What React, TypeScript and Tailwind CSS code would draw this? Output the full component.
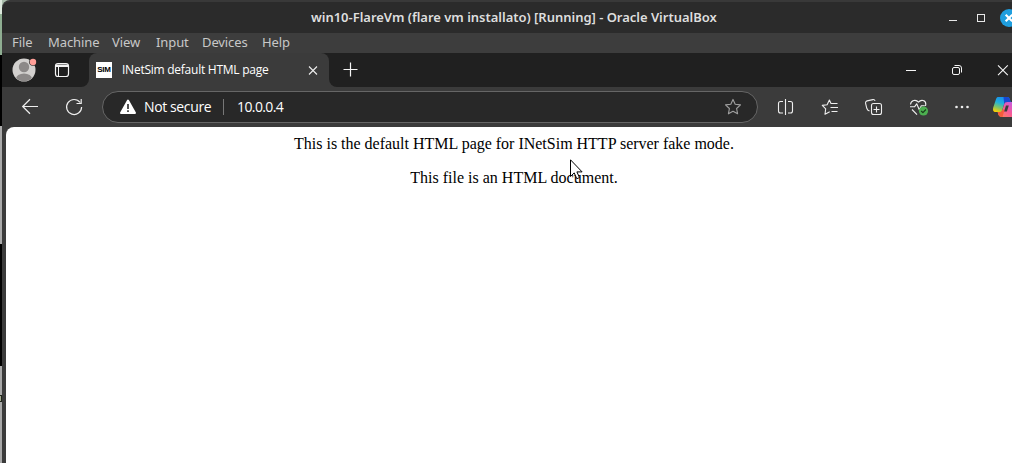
import React from "react";

const menuItems = [
  { label: "File", box: "w-[36px]" },
  { label: "Machine", box: "w-[64px]" },
  { label: "View", box: "w-[44px]" },
  { label: "Input", box: "w-[46px]" },
  { label: "Devices", box: "w-[60px]" },
  { label: "Help", box: "w-[40px]" },
];

function TitleBar() {
  return (
    <div className="h-[33px] shrink-0 bg-[linear-gradient(90deg,#a9bdab_10px,#393939_10px)]">
      <div className="flex h-full items-center rounded-tl-lg border-t-2 border-[#393939] bg-[#2b2b2b]">
        <div className="w-[309px]" />
        <div className="w-[406px] whitespace-nowrap pb-[2px] font-['Noto_Sans','Open_Sans',sans-serif] text-[13px] font-semibold leading-5 tracking-[-0.02px] text-[#dedede]">
          win10-FlareVm (flare vm installato) [Running] - Oracle VirtualBox
        </div>
        <svg className="ml-auto shrink-0" width="72" height="30" viewBox="0 0 72 30">
          <path d="M9 17.500h8" stroke="#e8e8e8" />
          <rect x="37.500" y="11.500" width="7" height="7" fill="none" stroke="#e8e8e8" />
          <circle cx="69" cy="15" r="9" fill="#1f9ede" />
          <path d="M65.700 11.700l6.600 6.600M72.300 11.700l-6.600 6.600" stroke="#fff" strokeWidth="2.200" />
        </svg>
      </div>
    </div>
  );
}

function MenuBar() {
  return (
    <div className="flex h-5 shrink-0 items-center bg-[#3d3d3d] pb-[2px] pl-[10px] font-['Noto_Sans','Open_Sans',sans-serif] text-[13px] leading-[18px] tracking-[-0.1px] text-[#c8c8c8]">
      {menuItems.map((m) => (
        <div key={m.label} className={`${m.box} shrink-0 whitespace-nowrap`}>
          {m.label}
        </div>
      ))}
    </div>
  );
}

function TabStrip() {
  return (
    <div className="flex h-[34px] shrink-0 bg-[#3b3b3b]">
      <div className="w-[87px] rounded-br-lg bg-[#202020]">
        <svg width="87" height="34" viewBox="2 53 87 34">
          <defs>
            <clipPath id="avatar"><circle cx="24" cy="70" r="11.3" /></clipPath>
          </defs>
          <circle cx="24" cy="70" r="11.5" fill="#d2d0ce" />
          <g clipPath="url(#avatar)" fill="#8c8988">
            <circle cx="24" cy="67" r="5.2" />
            <ellipse cx="24" cy="79" rx="8" ry="5.5" />
          </g>
          <circle cx="33" cy="62" r="3.8" fill="#202020" />
          <circle cx="33" cy="62" r="3.2" fill="#ff9e97" />
          <rect x="55.5" y="63.5" width="13" height="13" rx="2.5" fill="none" stroke="#f5f5f5" strokeWidth="1.2" />
          <path d="M56 64.5h12v2.500H56z" fill="#f5f5f5" />
          <path d="M58.5 67v9" stroke="#f5f5f5" />
        </svg>
      </div>
      <div className="w-[240px] bg-[#202020]">
        <div className="flex h-full items-center rounded-t-lg bg-[#3b3b3b] pl-[7px]">
          <div className="flex h-4 w-4 shrink-0 items-center justify-center overflow-hidden bg-white font-['Liberation_Sans',sans-serif] text-[8px] font-bold leading-4 tracking-[-0.2px] text-black">
            SIM
          </div>
          <div className="ml-[10px] w-[186px] whitespace-nowrap font-['Open_Sans','Noto_Sans',sans-serif] text-[12px] leading-4 tracking-[-0.25px] text-white">
            INetSim default HTML page
          </div>
          <svg className="shrink-0" width="10" height="10" viewBox="0 0 10 10">
            <path d="M1 1.500l8 8M9 1.500l-8 8" stroke="#eee" strokeWidth="1.1" />
          </svg>
        </div>
      </div>
      <div className="flex flex-1 rounded-bl-lg bg-[#202020]">
        <svg width="683" height="34" viewBox="329 53 683 34" fill="none" stroke="#f5f5f5">
          <path d="M343.5 69.5h14M350.5 62.5v14" strokeWidth="1.2" />
          <path d="M906 70.5h10" />
          <rect x="952.5" y="67.5" width="7" height="7" rx="1.5" />
          <path d="M954.5 65.5h4.5a2.5 2.5 0 0 1 2.5 2.5v4.5" />
          <path d="M998 65.3l9.8 9.8M1007.8 65.3l-9.8 9.8" strokeWidth="1.1" />
        </svg>
      </div>
    </div>
  );
}

function Toolbar() {
  return (
    <div className="flex h-10 shrink-0 items-center bg-[#3b3b3b]">
      <svg className="shrink-0" width="100" height="40" viewBox="2 87 100 40" fill="none" stroke="#eee" strokeWidth="1.2">
        <path d="M38 106.5H22.8M30 99.3l-7.3 7.2 7.3 7.2" />
        <path d="M80.1 102.5a7.5 7.5 0 1 0 1.5 4.5M81.2 99v4.5h-4.7" />
      </svg>
      <div className="flex h-8 w-[656px] shrink-0 items-center rounded-full border border-[#666] bg-[#282828] pl-[17px] font-['Open_Sans','Noto_Sans',sans-serif] text-[14px] leading-5 text-white">
        <svg className="shrink-0" width="16" height="16" viewBox="0 0 16 16">
          <path d="M8 1.5L15 14H1z" fill="#fff" stroke="#fff" strokeWidth="2" strokeLinejoin="round" />
          <path d="M8 5v5M8 11.3v1.7" stroke="#282828" strokeWidth="1.6" />
        </svg>
        <div className="ml-2 w-[79px] whitespace-nowrap tracking-[-0.38px]">Not secure</div>
        <div className="h-4 w-px bg-[#777]" />
        <div className="ml-[13px] flex-1 tracking-[-0.6px]">10.0.0.4</div>
        <svg className="mr-[15px] shrink-0" width="18" height="18" viewBox="0 0 18 18">
          <path d="M9 1.4l2.2 4.9 5.3.6-3.9 3.6 1 5.3L9 13.2l-4.6 2.6 1-5.3-3.9-3.6 5.3-.6z" fill="none" stroke="#a0a0a0" strokeWidth="1.1" strokeLinejoin="round" />
        </svg>
      </div>
      <ToolbarIcons />
    </div>
  );
}

function ToolbarIcons() {
  return (
    <svg className="shrink-0" width="254" height="40" viewBox="758 87 254 40" fill="none" stroke="#eee" strokeWidth="1.1" strokeLinejoin="round">
      <defs>
        <linearGradient id="cool" x1="0.6" y1="0" x2="0.2" y2="1">
          <stop offset="0" stopColor="#178cf0" />
          <stop offset="0.4" stopColor="#20b0dd" />
          <stop offset="0.7" stopColor="#7cc46a" />
          <stop offset="1" stopColor="#ffd000" />
        </linearGradient>
        <linearGradient id="warm" x1="1" y1="0" x2="0" y2="1">
          <stop offset="0" stopColor="#b65cf5" />
          <stop offset="0.5" stopColor="#f6599b" />
          <stop offset="1" stopColor="#ff8a4c" />
        </linearGradient>
      </defs>
      <path d="M783 101.5h-2.5a2 2 0 0 0-2 2v7.5a2 2 0 0 0 2 2h2.5M788 101.5h2.5a2 2 0 0 1 2 2v7.5a2 2 0 0 1-2 2H788M785.5 99v16" />
      <path d="M837.5 103.5h-6.5l-1.6-3.5-2.3 4.7-4.8.7 3.4 3.4-.7 5.4 4.7-2.4M830.5 107.5h7.5M831.5 111.5h6" />
      <rect x="871.5" y="103.5" width="10" height="11" rx="2" />
      <path d="M873.5 109.5h6M876.5 106.5v6M869.5 111l-1.8-.9-.9-1.8-1.2-5a2 2 0 0 1 1.5-2.4l5.7-1.3a2 2 0 0 1 2.3 1.3" />
      <path d="M910.5 104.5c.5-4.500 5.500-5.300 8-2.300 2.500-3 7.500-2.200 7.300 2.300l-.3 1.500M912 109.500l5 5.200M910 106.800h4.500l2.200-3 2.600 6 2-4h3.500" />
      <circle cx="923.5" cy="111" r="4.6" fill="#4caf50" stroke="none" />
      <path d="M921.2 111l1.7 1.7 3-3.2" stroke="#193b1a" strokeWidth="1.2" />
      <g fill="#eee" stroke="none">
        <circle cx="956.5" cy="107" r="1.3" />
        <circle cx="962" cy="107" r="1.3" />
        <circle cx="967.5" cy="107" r="1.3" />
      </g>
      <g stroke="none">
        <path d="M998.5 97h8.5c2 0 2.5 1 3 3l.6 2h-3.4c-2.2 0-2.800 1-3.400 3l-1.500 5c-.6 1.700-1.300 2-3 2h-3.300c-3 0-3.400-2-2.600-5l2.500-7.500c.6-1.900 1.300-2.500 2.600-2.500z" fill="url(#cool)" />
        <path d="M1003.5 97h3.5c2 0 2.5 1 3 3l.6 2h-3.400c-1.700 0-2.400.7-3 2z" fill="#1748d2" />
        <path d="M1010.5 102h5v15h-13.5c-2.400 0-3.500-1.500-3.800-3l-.5-2h1.800c1.700 0 2.400-.6 3-2.300l1.500-5c.7-2 1.500-2.700 3.500-2.700z" fill="url(#warm)" />
        <path d="M997.7 112h1.8c1.700 0 2.400-.6 3-2.300l2-.2-2 7.500c-2.700 0-3.900-1-4.300-3z" fill="#f45c3c" />
        <path d="M1006 105.500h2.800l-1.900 6h-2.800z" fill="#3b3b3b" />
      </g>
    </svg>
  );
}

function Page() {
  return (
    <div className="min-h-0 flex-1 bg-[#3b3b3b] pl-1">
      <div className="relative h-full rounded-tl-lg bg-white pt-2 pl-[10px] text-center font-['Liberation_Serif',serif] text-[16px] leading-[18px] text-black">
        <p className="mb-4 tracking-[-0.01px]">This is the default HTML page for INetSim HTTP server fake mode.</p>
        <p>This file is an HTML document.</p>
        <svg className="absolute left-[564px] top-[32px]" width="14" height="22" viewBox="0 0 14 22">
          <path d="M.5.8v16.700l3.700-3.600 2.600 5.800 2.700-1.100-2.600-5.700h5.200z" fill="#fff" stroke="#000" />
        </svg>
      </div>
    </div>
  );
}

export default function App() {
  return (
    <div className="flex h-[463px] w-[1012px] overflow-hidden bg-[#202020]">
      <div className="flex w-[2px] shrink-0 flex-col">
        <div className="h-[14px] bg-[#dce8dc]" />
        <div className="h-[41px] bg-[#8fae92]" />
        <div className="h-[71px] bg-black" />
        <div className="h-[118px] bg-[#aaaaaa]" />
        <div className="h-[122px] bg-black" />
        <div className="h-[29px] bg-[#a8a8a8]" />
        <div className="h-[7px] border-y border-r border-[#20251b] bg-[#a5ab91]" />
        <div className="flex-1 bg-[#a8a8a8]" />
      </div>
      <div className="flex w-[1010px] flex-col">
        <TitleBar />
        <MenuBar />
        <TabStrip />
        <Toolbar />
        <Page />
      </div>
    </div>
  );
}
